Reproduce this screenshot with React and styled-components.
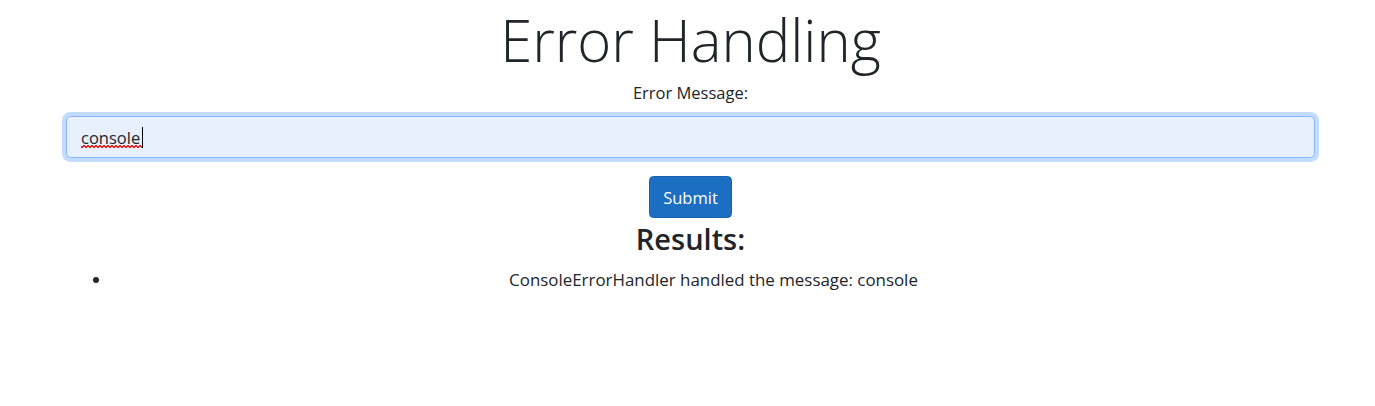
import React from 'react';
import styled, { createGlobalStyle } from 'styled-components';

const GlobalStyle = createGlobalStyle`
    html, body {
        margin: 0;
        padding: 0;
        background: #fff;
    }
    body {
        font-family: "Open Sans", "Noto Sans", "Liberation Sans", sans-serif;
        font-size: 17.6px;
        line-height: 1.5;
        color: #212529;
    }
`;

const Page = styled.main`
    padding: 0 60px 0 66px;
    text-align: center;
`;

const Title = styled.h1`
    margin: 0;
    font-size: 58px;
    font-weight: 300;
    line-height: 80px;
`;

const Label = styled.label`
    display: block;
    margin-top: 0;
    font-size: 16.5px;
    line-height: 26px;
`;

const Form = styled.form`
    display: flex;
    flex-direction: column;
    align-items: center;
    gap: 18px;
    margin-top: 10px;
`;

const InputWrap = styled.div`
    position: relative;
    width: 100%;
`;

const TextInput = styled.input`
    display: block;
    box-sizing: border-box;
    width: 100%;
    height: 42px;
    padding: 0 14px;
    font-family: inherit;
    font-size: 16.5px;
    color: #212529;
    background: #e8f0fe;
    border: 1px solid #86b7fe;
    border-radius: 4.5px;
    box-shadow: 0 0 0 4px rgba(13, 110, 253, 0.25);
    outline: none;
`;

const Squiggle = styled.span`
    position: absolute;
    left: 15px;
    top: 29px;
    width: 62px;
    height: 3px;
    pointer-events: none;
    background:
        linear-gradient(135deg, transparent 40%, #e3241f 40% 60%, transparent 60%),
        linear-gradient(45deg, transparent 40%, #e3241f 40% 60%, transparent 60%);
    background-size: 4px 3px;
    background-position: 0 0, 2px 0;
`;

const Caret = styled.span`
    position: absolute;
    left: 76px;
    top: 11px;
    width: 1px;
    height: 21px;
    background: #000;
    pointer-events: none;
`;

const SubmitButton = styled.button`
    box-sizing: border-box;
    height: 42px;
    padding: 0 13px;
    font-family: inherit;
    font-size: 16.5px;
    color: #fff;
    background: #1b6ec2;
    border: 1px solid #1861ac;
    border-radius: 4.5px;
    cursor: pointer;
`;

const ResultsTitle = styled.h3`
    margin: 3px 0 10px;
    font-size: 29px;
    font-weight: 600;
    line-height: 36px;
`;

const ResultList = styled.ul`
    margin: 0;
    padding-left: 46px;
`;

const ResultItem = styled.li`
    font-size: 16.9px;
    line-height: 26px;
`;

export default function App() {
    const results = ['ConsoleErrorHandler handled the message: console'];

    return (
        <>
            <GlobalStyle />
            <Page>
                <Title>Error Handling</Title>
                <Label htmlFor="message">Error Message:</Label>
                <Form onSubmit={(e) => e.preventDefault()}>
                    <InputWrap>
                        <TextInput id="message" defaultValue="console" spellCheck={false} />
                        <Squiggle />
                        <Caret />
                    </InputWrap>
                    <SubmitButton type="submit">Submit</SubmitButton>
                </Form>
                <ResultsTitle>Results:</ResultsTitle>
                <ResultList>
                    {results.map((r) => (
                        <ResultItem key={r}>{r}</ResultItem>
                    ))}
                </ResultList>
            </Page>
        </>
    );
}
